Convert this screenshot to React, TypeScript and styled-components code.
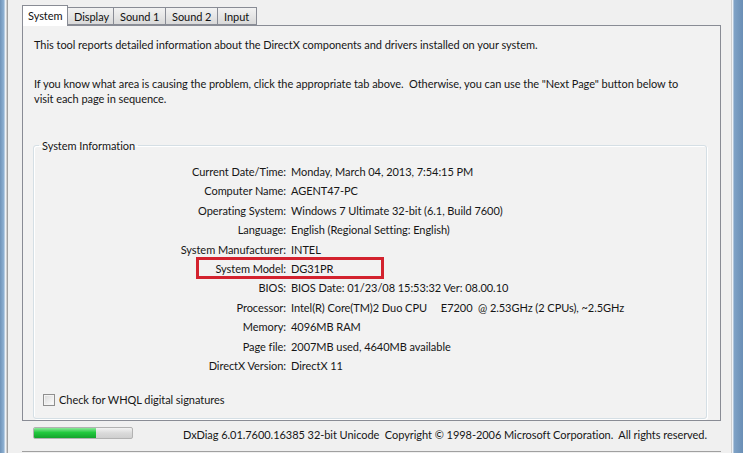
import React from "react";
import styled, { createGlobalStyle } from "styled-components";

const Global = createGlobalStyle`
  html, body { margin: 0; padding: 0; }
  body {
    width: 743px; height: 453px; overflow: hidden;
    font-family: Lato, "Liberation Sans", Arial, sans-serif;
    font-size: 11px; letter-spacing: -0.05px; color: #161616;
    background: #f0f0f0;
  }
`;

const Frame = styled.div`
  display: flex;
  width: 743px;
  height: 453px;
`;

const Edge = styled.div<{ $w: number; $side: "l" | "r" }>`
  width: ${(p) => p.$w}px;
  flex: none;
  background: ${(p) =>
    p.$side === "l"
      ? "linear-gradient(90deg, #6f93b8 0, #8fb2d4 4px, #dfe8f1 5px, #ffffff 6px, #a0a0a0 7px, #a0a0a0 8px)"
      : "linear-gradient(90deg, #a0a0a0 0, #ffffff 1px, #dfe8f1 2px, #7fa2c6 3px, #6a8fb6 100%)"};
`;

const Body = styled.div`
  flex: 1;
  display: flex;
  flex-direction: column;
  padding-left: 14px;
  background: #f0f0f0;
`;

const TabStrip = styled.div`
  display: flex;
  align-items: flex-end;
  height: 25px;
  position: relative;
  z-index: 1;
`;

const Tab = styled.div<{ $active?: boolean; $w: number }>`
  box-sizing: border-box;
  width: ${(p) => p.$w}px;
  height: ${(p) => (p.$active ? 21 : 18)}px;
  margin-bottom: ${(p) => (p.$active ? -1 : 0)}px;
  border: 1px solid #898c95;
  border-bottom: ${(p) => (p.$active ? "none" : "1px solid #898c95")};
  margin-right: -1px;
  background: ${(p) =>
    p.$active ? "#ffffff" : "linear-gradient(#f2f2f2, #e6e6e6 50%, #d9d9d9)"};
  display: flex;
  align-items: center;
  white-space: nowrap;
  padding-left: ${(p) => (p.$active ? 5 : 6)}px;
  padding-bottom: ${(p) => (p.$active ? 2 : 0)}px;
  color: #111;
`;

const Panel = styled.div`
  box-sizing: border-box;
  width: 699px;
  height: 396px;
  border: 1px solid #898c95;
  background: #f2f2f2;
  padding: 11px 13px 0 10px;
  display: flex;
  flex-direction: column;
`;

const Para = styled.p<{ $gap?: number }>`
  margin: ${(p) => p.$gap ?? 0}px 0 0 0;
  max-width: 664px;
  line-height: 15px;
  padding-left: 1px;
`;

const GroupBox = styled.fieldset`
  box-sizing: border-box;
  margin: 33px 0 0 0;
  height: 280px;
  border: 1px solid #d5dfe5;
  border-radius: 3px;
  padding: 10px 0 0 0;
  box-shadow: inset 1px 1px 0 #fff, 1px 1px 0 #fff;
  min-width: 0;
`;

const Legend = styled.legend`
  padding: 0 3px;
  margin-left: 5px;
`;

const InfoGrid = styled.div`
  display: grid;
  grid-template-columns: 252px auto;
  column-gap: 5px;
`;

const Label = styled.div`
  text-align: right;
  height: 19.4px;
  line-height: 19.4px;
  white-space: nowrap;
`;

const Value = styled.div`
  height: 19.4px;
  line-height: 19.4px;
  white-space: pre;
  position: relative;
`;

const Highlight = styled.div`
  position: absolute;
  left: -95px;
  top: -2px;
  width: 188px;
  height: 22px;
  box-sizing: border-box;
  border: 3px solid #d3222e;
`;

const CheckRow = styled.label`
  display: flex;
  align-items: center;
  gap: 4px;
  margin: 18px 0 0 9px;
`;

const Box = styled.span`
  width: 12px;
  height: 12px;
  box-sizing: border-box;
  border: 1px solid #8f8f8f;
  background: linear-gradient(135deg, #d8d8d8, #ffffff);
  box-shadow: inset 0 0 0 1px #f4f4f4;
`;

const Footer = styled.div`
  box-sizing: border-box;
  width: 699px;
  height: 31px;
  display: flex;
  align-items: center;
  padding: 0 0 6px 11px;
  border-bottom: 1px solid #a0a0a0;
`;

const Progress = styled.div`
  flex: none;
  width: 100px;
  height: 12px;
  box-sizing: border-box;
  border: 1px solid #b2b2b2;
  border-radius: 2px;
  background: linear-gradient(#f3f3f3, #dadada 50%, #cfcfcf);
  overflow: hidden;
  display: flex;
`;

const Fill = styled.div`
  height: 100%;
  background: linear-gradient(#8ae898, #22c93e 45%, #14a32c);
`;

const FooterText = styled.div`
  margin-left: auto;
  margin-right: 14px;
  padding-top: 2px;
  white-space: pre;
`;

const rows: [string, string][] = [
  ["Current Date/Time:", "Monday, March 04, 2013, 7:54:15 PM"],
  ["Computer Name:", "AGENT47-PC"],
  ["Operating System:", "Windows 7 Ultimate 32-bit (6.1, Build 7600)"],
  ["Language:", "English (Regional Setting: English)"],
  ["System Manufacturer:", "INTEL"],
  ["System Model:", "DG31PR"],
  ["BIOS:", "BIOS Date: 01/23/08 15:53:32 Ver: 08.00.10"],
  ["Processor:", "Intel(R) Core(TM)2 Duo CPU     E7200  @ 2.53GHz (2 CPUs), ~2.5GHz"],
  ["Memory:", "4096MB RAM"],
  ["Page file:", "2007MB used, 4640MB available"],
  ["DirectX Version:", "DirectX 11"],
];

const tabs: [string, number][] = [
  ["System", 46],
  ["Display", 47],
  ["Sound 1", 53],
  ["Sound 2", 53],
  ["Input", 40],
];

const progress = 63;

export default function App() {
  return (
    <>
      <Global />
      <Frame>
        <Edge $w={8} $side="l" />
        <Body>
          <TabStrip>
            {tabs.map(([t, w], i) => (
              <Tab key={t} $w={w} $active={i === 0}>
                {t}
              </Tab>
            ))}
          </TabStrip>
          <Panel>
            <Para>
              This tool reports detailed information about the DirectX components and drivers installed on your system.
            </Para>
            <Para $gap={24}>
              If you know what area is causing the problem, click the appropriate tab above.&nbsp; Otherwise, you can use the "Next Page" button below to visit each page in sequence.
            </Para>
            <GroupBox>
              <Legend>System Information</Legend>
              <InfoGrid>
                {rows.map(([l, v]) => (
                  <React.Fragment key={l}>
                    <Label>{l}</Label>
                    <Value>
                      {l === "System Model:" && <Highlight />}
                      {v}
                    </Value>
                  </React.Fragment>
                ))}
              </InfoGrid>
              <CheckRow>
                <Box />
                Check for WHQL digital signatures
              </CheckRow>
            </GroupBox>
          </Panel>
          <Footer>
            <Progress>
              <Fill style={{ width: `${progress}%` }} />
            </Progress>
            <FooterText>
              DxDiag 6.01.7600.16385 32-bit Unicode  Copyright © 1998-2006 Microsoft Corporation.  All rights reserved.
            </FooterText>
          </Footer>
        </Body>
        <Edge $w={12} $side="r" />
      </Frame>
    </>
  );
}
